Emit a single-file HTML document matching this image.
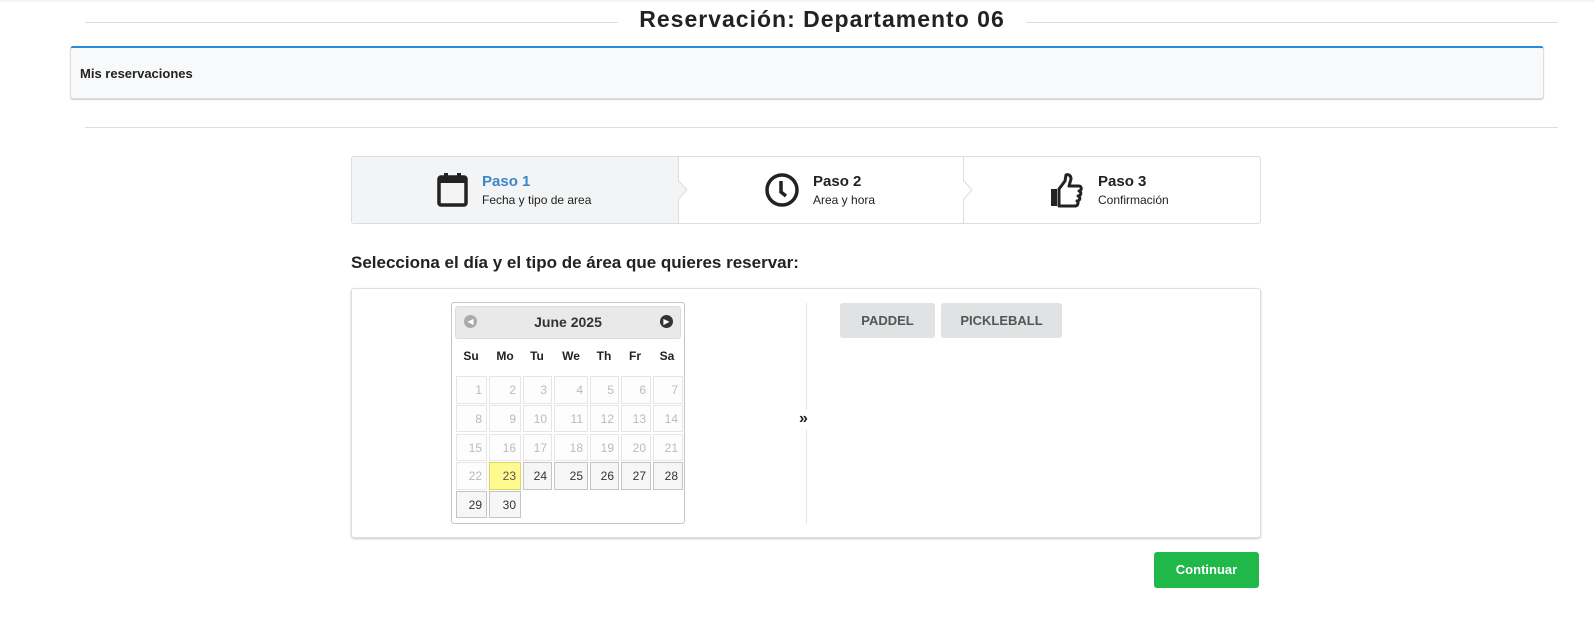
<!DOCTYPE html>
<html><head><meta charset="utf-8"><style>
*{box-sizing:border-box;margin:0;padding:0}
body{width:1595px;height:640px;background:#fff;font-family:"Liberation Sans",sans-serif;color:#222;position:relative;overflow:hidden}
.a{position:absolute}
.line{position:absolute;height:1px;background:#ddd}
.cell{position:absolute;border:1px solid #e6e6e6;background:#fdfdfd;color:#bbb;font-size:12px;text-align:right;padding-right:4px;line-height:26px}
.on{border-color:#c5c5c5;background:#f6f6f6;color:#333}
.hl{border-color:#dad55e;background:#fffa90;color:#555}
.dn{position:absolute;top:349px;font-size:12px;font-weight:bold;width:30px;text-align:center}
.btn{position:absolute;top:303px;height:35px;background:#e1e2e3;border-radius:3px;font-size:13px;font-weight:bold;color:#555;text-align:center;line-height:35px}
</style></head><body>
<div class="a" style="left:0;top:0;width:1595px;height:2px;background:#f3f3f3"></div>
<div class="line" style="left:85px;top:22px;width:533px"></div>
<div class="line" style="left:1026px;top:22px;width:532px"></div>
<div class="a" style="left:618px;top:6px;width:408px;text-align:center;font-size:23px;font-weight:bold;letter-spacing:1px;color:#222">Reservación: Departamento 06</div>
<div class="a" style="left:70px;top:46px;width:1474px;height:53px;background:#f8f9fa;border:1px solid #ddd;border-top:2px solid #2c88d9;border-radius:3px;box-shadow:0 1px 1px #ccc"></div>
<div class="a" style="left:80px;top:66px;font-size:13px;font-weight:bold;color:#222">Mis reservaciones</div>
<div class="line" style="left:85px;top:127px;width:1473px"></div>

<div class="a" style="left:351px;top:156px;width:910px;height:68px;border:1px solid #ddd;border-radius:3px"></div>
<div class="a" style="left:352px;top:157px;width:327px;height:66px;background:#f3f4f5"></div>
<div class="a" style="left:678px;top:157px;width:1px;height:66px;background:#ddd"></div>
<div class="a" style="left:963px;top:157px;width:1px;height:66px;background:#ddd"></div>
<svg class="a" style="left:678px;top:180px" width="12" height="20"><path d="M0 0L9 10L0 20" fill="#f3f4f5" stroke="#ddd"/></svg>
<svg class="a" style="left:963px;top:180px" width="12" height="20"><path d="M0 0L9 10L0 20" fill="#fff" stroke="#ddd"/></svg>
<svg class="a" style="left:436px;top:172px" width="34" height="36"><rect x="3" y="5" width="27" height="28" rx="2" fill="none" stroke="#222" stroke-width="3.5"/><rect x="3" y="5" width="27" height="6" fill="#222"/><rect x="8" y="1" width="4" height="7" fill="#222"/><rect x="21" y="1" width="4" height="7" fill="#222"/></svg>
<div class="a" style="left:482px;top:173px;font-size:15px;font-weight:bold;color:#3a87c8">Paso 1</div>
<div class="a" style="left:482px;top:193px;font-size:12px;color:#222">Fecha y tipo de area</div>
<svg class="a" style="left:764px;top:172px" width="36" height="36"><circle cx="18" cy="18" r="15" fill="none" stroke="#222" stroke-width="3.5"/><path d="M17 9V20L22 24" fill="none" stroke="#222" stroke-width="3.5"/></svg>
<div class="a" style="left:813px;top:173px;font-size:15px;font-weight:bold">Paso 2</div>
<div class="a" style="left:813px;top:193px;font-size:12px">Area y hora</div>
<svg class="a" style="left:1048px;top:172px" width="36" height="38"><path d="M3 17H9V34H3Z" fill="#222"/><path d="M11 17L17 9L18 3C20 2 23 3 23 7L21 14H31C34 14 34 19 31 19C34 20 33 24 30 24C33 25 32 29 29 29C31 30 30 34 27 34H11Z" fill="none" stroke="#222" stroke-width="3" stroke-linejoin="round"/></svg>
<div class="a" style="left:1098px;top:173px;font-size:15px;font-weight:bold">Paso 3</div>
<div class="a" style="left:1098px;top:193px;font-size:12px">Confirmación</div>

<div class="a" style="left:351px;top:253px;font-size:17px;font-weight:bold;color:#222">Selecciona el día y el tipo de área que quieres reservar:</div>

<div class="a" style="left:351px;top:288px;width:910px;height:250px;border:1px solid #ddd;border-radius:3px;box-shadow:0 1px 2px #ccc"></div>
<div class="a" style="left:806px;top:303px;width:1px;height:221px;background:#e5e5e5"></div>
<div class="a" style="left:799px;top:409px;width:16px;height:20px;background:#fff;font-size:16px;font-weight:bold;line-height:20px">»</div>
<div class="btn" style="left:840px;width:95px">PADDEL</div>
<div class="btn" style="left:941px;width:121px">PICKLEBALL</div>
<div class="a" style="left:1154px;top:552px;width:105px;height:36px;background:#21b84a;border-radius:3px;color:#fff;font-size:13px;font-weight:bold;text-align:center;line-height:36px">Continuar</div>

<div class="a" style="left:451px;top:302px;width:234px;height:222px;border:1px solid #c5c5c5;border-radius:3px"></div>
<div class="a" style="left:455px;top:306px;width:226px;height:33px;background:#e9e9e9;border:1px solid #ddd;border-radius:3px;text-align:center;font-weight:bold;font-size:14px;line-height:31px;color:#333">June 2025</div>
<div class="a" style="left:464px;top:315px;width:13px;height:13px;border-radius:50%;background:#aaa;color:#fff;font-size:8px;line-height:13px;text-align:center">◀</div>
<div class="a" style="left:660px;top:315px;width:13px;height:13px;border-radius:50%;background:#333;color:#fff;font-size:8px;line-height:13px;text-align:center">▶</div>
<div class="dn" style="left:456px">Su</div><div class="dn" style="left:490px">Mo</div><div class="dn" style="left:522px">Tu</div><div class="dn" style="left:556px">We</div><div class="dn" style="left:589px">Th</div><div class="dn" style="left:620px">Fr</div><div class="dn" style="left:652px">Sa</div>

<div class="cell" style="left:456px;top:376px;width:31px;height:28px">1</div><div class="cell" style="left:489px;top:376px;width:32px;height:28px">2</div><div class="cell" style="left:523px;top:376px;width:29px;height:28px">3</div><div class="cell" style="left:554px;top:376px;width:34px;height:28px">4</div><div class="cell" style="left:590px;top:376px;width:29px;height:28px">5</div><div class="cell" style="left:621px;top:376px;width:30px;height:28px">6</div><div class="cell" style="left:653px;top:376px;width:30px;height:28px">7</div>
<div class="cell" style="left:456px;top:405px;width:31px;height:27px">8</div><div class="cell" style="left:489px;top:405px;width:32px;height:27px">9</div><div class="cell" style="left:523px;top:405px;width:29px;height:27px">10</div><div class="cell" style="left:554px;top:405px;width:34px;height:27px">11</div><div class="cell" style="left:590px;top:405px;width:29px;height:27px">12</div><div class="cell" style="left:621px;top:405px;width:30px;height:27px">13</div><div class="cell" style="left:653px;top:405px;width:30px;height:27px">14</div>
<div class="cell" style="left:456px;top:434px;width:31px;height:27px">15</div><div class="cell" style="left:489px;top:434px;width:32px;height:27px">16</div><div class="cell" style="left:523px;top:434px;width:29px;height:27px">17</div><div class="cell" style="left:554px;top:434px;width:34px;height:27px">18</div><div class="cell" style="left:590px;top:434px;width:29px;height:27px">19</div><div class="cell" style="left:621px;top:434px;width:30px;height:27px">20</div><div class="cell" style="left:653px;top:434px;width:30px;height:27px">21</div>
<div class="cell" style="left:456px;top:462px;width:31px;height:28px">22</div><div class="cell hl" style="left:489px;top:462px;width:32px;height:28px">23</div><div class="cell on" style="left:523px;top:462px;width:29px;height:28px">24</div><div class="cell on" style="left:554px;top:462px;width:34px;height:28px">25</div><div class="cell on" style="left:590px;top:462px;width:29px;height:28px">26</div><div class="cell on" style="left:621px;top:462px;width:30px;height:28px">27</div><div class="cell on" style="left:653px;top:462px;width:30px;height:28px">28</div>
<div class="cell on" style="left:456px;top:491px;width:31px;height:27px">29</div><div class="cell on" style="left:489px;top:491px;width:32px;height:27px">30</div>
</body></html>
